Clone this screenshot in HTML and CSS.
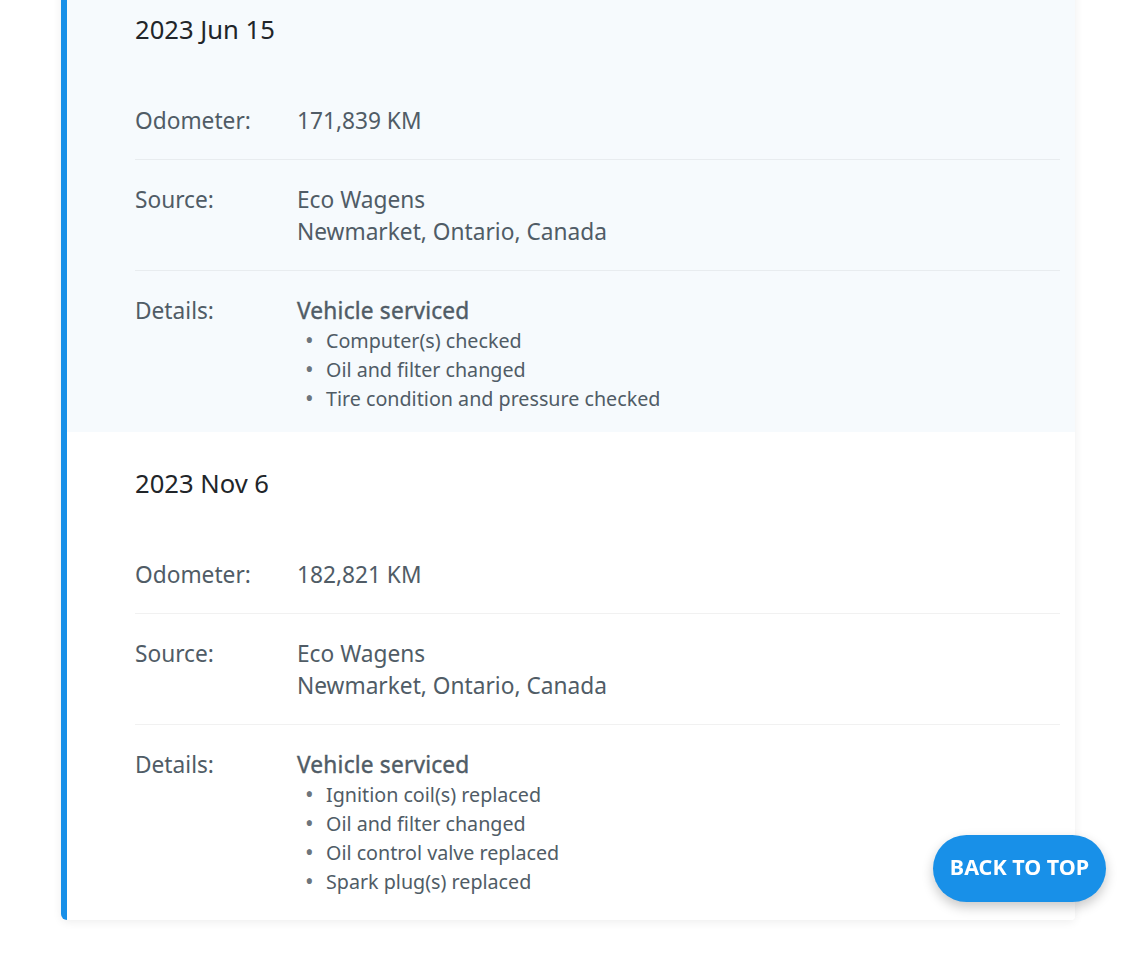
FILE: index.html
```html
<!DOCTYPE html>
<html lang="en">
<head>
<meta charset="utf-8">
<title>Service history</title>
<link rel="stylesheet" href="styles.css">
</head>
<body>
<main class="page">
  <section class="history-card">
    <article class="record record-alt">
      <h2 class="record-date">2023 Jun 15</h2>
      <div class="row">
        <div class="label">Odometer:</div>
        <div class="value">171,839 KM</div>
      </div>
      <div class="row">
        <div class="label">Source:</div>
        <div class="value">Eco Wagens<br>Newmarket, Ontario, Canada</div>
      </div>
      <div class="row row-last">
        <div class="label">Details:</div>
        <div class="value">
          <div class="detail-title">Vehicle serviced</div>
          <ul class="detail-list">
            <li>Computer(s) checked</li>
            <li>Oil and filter changed</li>
            <li>Tire condition and pressure checked</li>
          </ul>
        </div>
      </div>
    </article>
    <article class="record">
      <h2 class="record-date">2023 Nov 6</h2>
      <div class="row">
        <div class="label">Odometer:</div>
        <div class="value">182,821 KM</div>
      </div>
      <div class="row">
        <div class="label">Source:</div>
        <div class="value">Eco Wagens<br>Newmarket, Ontario, Canada</div>
      </div>
      <div class="row row-last">
        <div class="label">Details:</div>
        <div class="value">
          <div class="detail-title">Vehicle serviced</div>
          <ul class="detail-list">
            <li>Ignition coil(s) replaced</li>
            <li>Oil and filter changed</li>
            <li>Oil control valve replaced</li>
            <li>Spark plug(s) replaced</li>
          </ul>
        </div>
      </div>
    </article>
  </section>
</main>
<a class="back-to-top" href="#">BACK TO TOP</a>
</body>
</html>
```

FILE: styles.css
```css
html, body {
  margin: 0;
  padding: 0;
  background: #ffffff;
}

body {
  font-family: "Noto Sans", "Open Sans", sans-serif;
  color: #505c66;
  height: 960px;
  overflow: hidden;
}

.page {
  padding: 0 62px 0 61px;
}

.history-card {
  margin-top: -22px;
  background: #ffffff;
  border-left: 6px solid #1890e8;
  border-radius: 0 0 4px 6px;
  box-shadow: 0 2px 10px rgba(0, 0, 0, 0.07);
  overflow: hidden;
}

.record {
  padding: 37px 15px 0 68px;
  background: #ffffff;
}

.record-alt {
  background: #f6fafd;
}

.record-date {
  margin: 0 0 36px 0;
  font-size: 25.6px;
  line-height: 30px;
  font-weight: 400;
  color: #212529;
}

.row {
  display: flex;
  padding: 24px 0 22px 0;
  border-bottom: 1px solid rgba(0, 0, 0, 0.055);
  font-size: 22.7px;
  line-height: 32px;
}

.row-last {
  border-bottom: none;
  padding-bottom: 19px;
}

.record:last-child .row-last {
  padding-bottom: 24px;
}

.label {
  width: 162px;
  flex: none;
}

.value {
  flex: 1;
}

.detail-title {
  font-weight: 400;
  letter-spacing: 0.2px;
  -webkit-text-stroke: 0.4px #505c66;
}

.detail-list {
  list-style: none;
  margin: -1px 0 0 0;
  padding: 0;
  font-size: 19.7px;
  line-height: 29px;
}

.detail-list li {
  position: relative;
  padding-left: 29px;
}

.detail-list li::before {
  content: "•";
  position: absolute;
  left: 8px;
  top: 0;
  font-size: 23px;
  line-height: 29px;
  color: #6c757d;
}

.back-to-top {
  position: fixed;
  right: 31px;
  bottom: 58px;
  width: 173px;
  height: 67px;
  box-sizing: border-box;
  padding-bottom: 5px;
  border-radius: 34px;
  background: #1890e8;
  color: #ffffff;
  font-weight: 700;
  font-size: 21.5px;
  text-decoration: none;
  display: flex;
  align-items: center;
  justify-content: center;
  box-shadow: 0 5px 12px rgba(0, 0, 0, 0.22);
}
```
